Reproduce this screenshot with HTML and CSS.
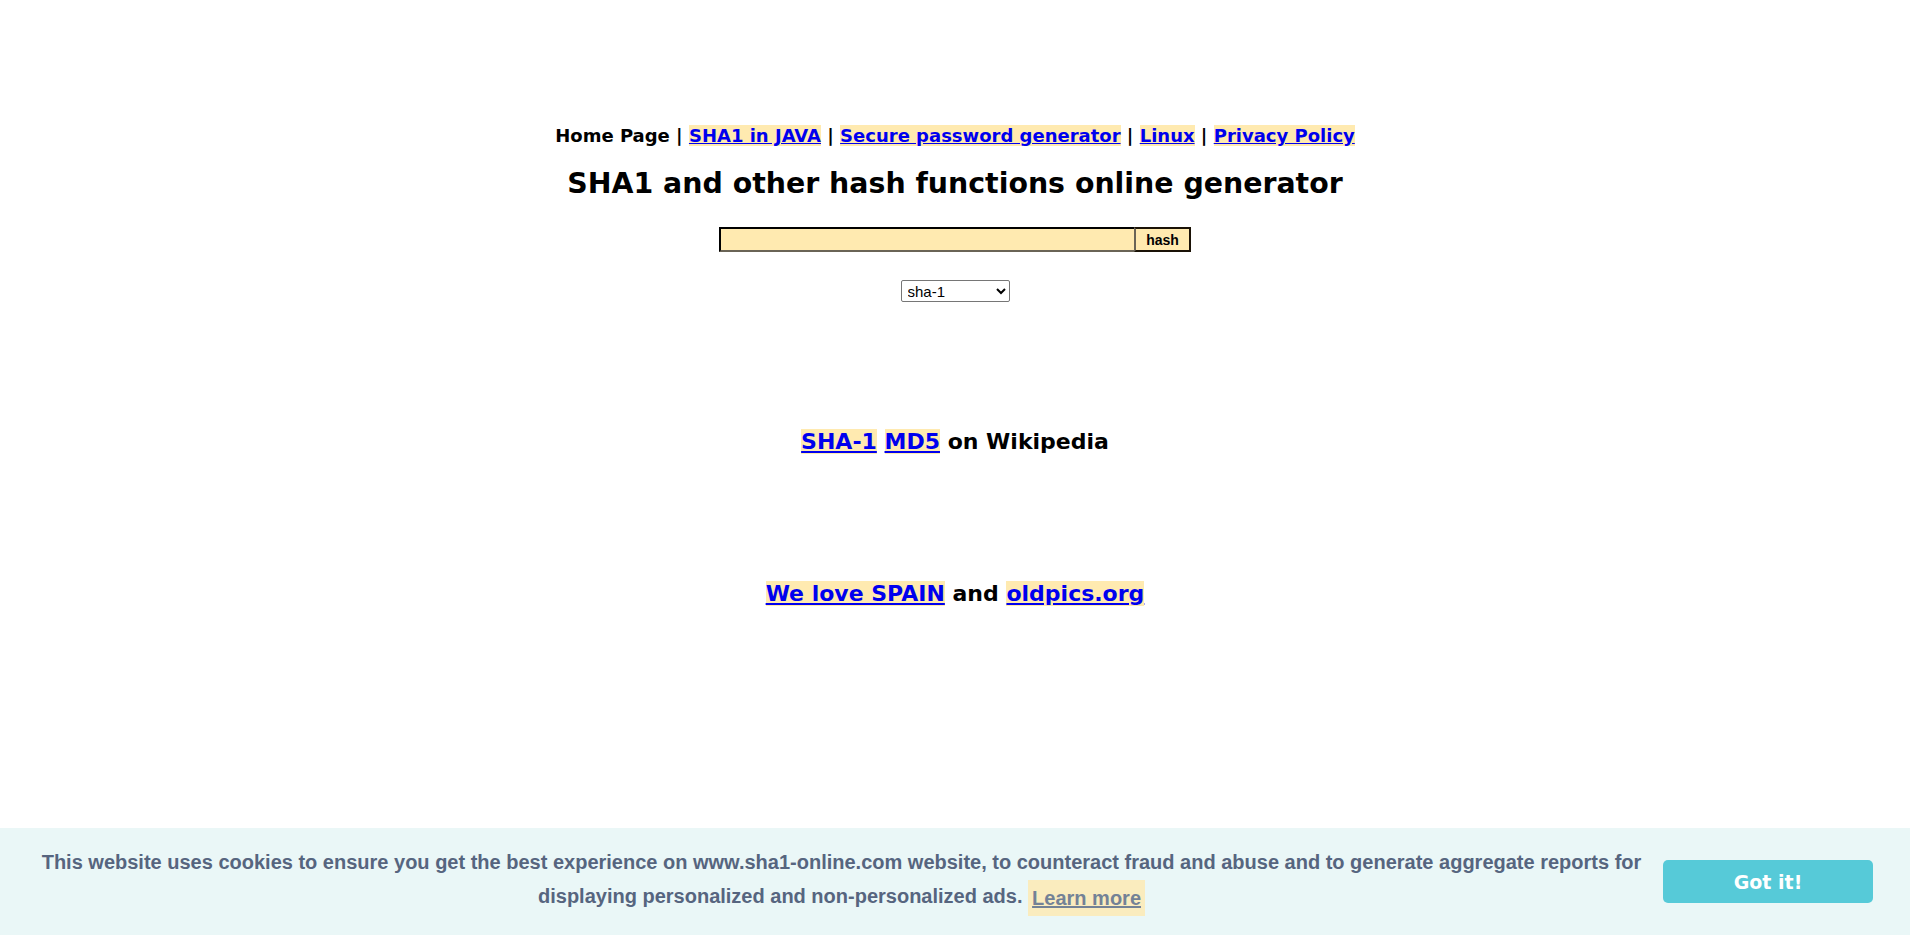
FILE: index.html
```html
<!DOCTYPE html>
<html>
<head>
<meta charset="utf-8">
<title>SHA1 online</title>
<link rel="stylesheet" href="styles.css">
</head>
<body>
<div class="page">
  <div class="nav">Home Page | <a href="#">SHA1 in JAVA</a> | <a href="#">Secure password generator</a> | <a href="#">Linux</a> | <a href="#">Privacy Policy</a></div>
  <h1 class="title">SHA1 and other hash functions online generator</h1>
  <form class="hashform">
    <div class="row"><input class="field" type="text"><button class="hashbtn" type="button">hash</button></div>
    <div class="row sel"><select class="algo"><option>sha-1</option><option>md5</option><option>sha256</option><option>sha512</option></select></div>
  </form>
  <div class="wiki"><a href="#">SHA-1</a> <a href="#">MD5</a> on Wikipedia</div>
  <div class="spain"><a href="#">We love SPAIN</a> and <a href="#">oldpics.org</a></div>
</div>
<div class="cookie">
  <div class="msg">This website uses cookies to ensure you get the best experience on www.sha1-online.com website, to counteract fraud and abuse and to generate aggregate reports for displaying personalized and non-personalized ads. <a class="learn" href="#">Learn more</a></div>
  <a class="gotit" href="#">Got it!</a>
</div>
</body>
</html>
```
FILE: styles.css
```css
html, body { margin: 0; padding: 0; background: #fff; }
body { font-family: "DejaVu Sans", Verdana, sans-serif; color: #000; }
.page { text-align: center; padding-top: 125px; }
.nav { font-size: 18px; font-weight: bold; line-height: 22px; }
a { color: #0000ee; background: #ffeab0; text-decoration: underline; }
.title { font-size: 28.4px; font-weight: bold; margin: 20px 0 0; line-height: 34px; }
.hashform { margin-top: 26px; }
.row { display: flex; justify-content: center; }
.field { width: 415px; height: 25px; box-sizing: border-box; background: #ffeab0; border: 2px inset #2a2117; border-right: 0; border-bottom-color: #6a6456; margin: 0; padding: 0 2px; }
.hashbtn { height: 25px; width: 57px; box-sizing: border-box; background: #ffeab0; border: 2px solid #1a1206; border-left-color: #6a6456; margin: 0; font-family: "Liberation Sans", Arial, sans-serif; font-weight: bold; font-size: 14px; padding: 0; color: #000; }
.sel { margin-top: 28px; }
.algo { width: 109px; height: 22px; font-family: "Liberation Sans", Arial, sans-serif; font-size: 15px; border: 1px solid #767676; border-radius: 2px; background: #fff; color: #000; padding: 0 2px; }
.wiki { font-size: 22px; font-weight: bold; margin-top: 126px; line-height: 28px; }
.spain { font-size: 22px; font-weight: bold; margin-top: 124px; line-height: 28px; }
.cookie { position: fixed; left: 0; right: 0; bottom: 0; height: 107px; box-sizing: border-box; background: #eaf7f7; display: flex; align-items: center; padding: 0 37px 0 20px; font-family: "Liberation Sans", Arial, sans-serif; font-weight: bold; color: #56657f; }
.msg { flex: 1; text-align: center; font-size: 20px; line-height: 34px; margin-top: -2px; }
.learn { color: #56657f; opacity: 0.8; background: #ffeab0; display: inline-block; padding: 2px 4px; line-height: 32px; vertical-align: middle; }
.gotit { width: 210px; height: 43px; flex: none; background: #56cad8; color: #fff; border-radius: 5px; display: flex; align-items: center; justify-content: center; text-decoration: none; font-family: "DejaVu Sans", Verdana, sans-serif; font-size: 19px; font-weight: bold; }
```
